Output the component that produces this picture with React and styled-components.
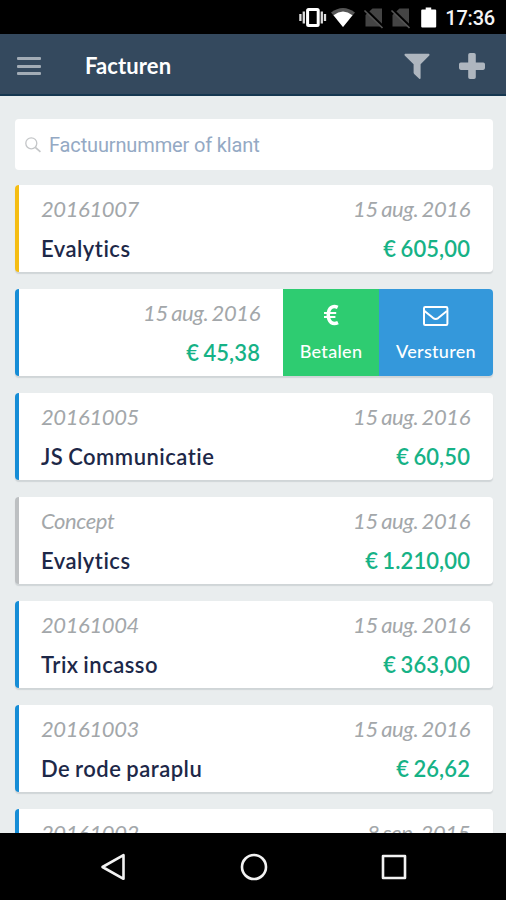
import React from 'react';
import { styled, createGlobalStyle } from 'styled-components';

const GlobalStyle = createGlobalStyle`
  * { box-sizing: border-box; }
  body {
    margin: 0;
    background: #e9edee;
    font-family: Lato, "Open Sans", sans-serif;
    font-variant-ligatures: none;
  }
`;

const Phone = styled.div`
  width: 506px;
  height: 900px;
  display: flex;
  flex-direction: column;
  overflow: hidden;
  background: #e9edee;
`;

const StatusBar = styled.div`
  height: 34px;
  flex: none;
  background: #000;
  display: flex;
  align-items: center;
  justify-content: flex-end;
  padding-right: 11px;
`;

const StatusIcons = styled.svg`
  display: block;
  width: 146px;
  height: 34px;
`;

const Clock = styled.span`
  width: 50px;
  color: #f4f4f4;
  font: 500 20px/34px Roboto, sans-serif;
  letter-spacing: -0.2px;
  text-align: right;
  padding-top: 2px;
  white-space: nowrap;
`;

const Header = styled.header`
  height: 62px;
  flex: none;
  display: flex;
  align-items: center;
  background: #34495e;
  border-bottom: 2px solid #153750;
  padding: 4px 21px 0 17px;
`;

const MenuButton = styled.div`
  width: 24px;
  height: 18px;
  display: flex;
  flex-direction: column;
  justify-content: space-between;

  span {
    height: 3px;
    border-radius: 1px;
    background: #a2acb6;
  }
`;

const Title = styled.h1`
  flex: 1;
  margin: 0 0 0 44px;
  color: #fff;
  font-size: 22px;
  font-weight: 700;
  line-height: 28px;
  letter-spacing: 0.1px;
`;

const HeaderIcon = styled.svg`
  display: block;
  width: 26px;
  height: 26px;
  margin-left: ${(props) => props.$gap || 0}px;
  fill: #aeb6bf;
`;

const Content = styled.main`
  flex: 1;
  min-height: 0;
  overflow: hidden;
  padding: 23px 13px 0 15px;
`;

const SearchBox = styled.div`
  height: 51px;
  display: flex;
  align-items: center;
  background: #fff;
  border-radius: 4px;
  padding-left: 10px;
  margin-bottom: 15px;
  color: #94a9c4;
  font: 400 20px/51px Roboto, sans-serif;
  letter-spacing: -0.14px;

  svg {
    width: 16px;
    height: 16px;
    margin-right: 8px;
  }

  span {
    padding-top: 2px;
  }
`;

const Card = styled.div`
  height: 87px;
  display: flex;
  margin-bottom: 17px;
  background: #fff;
  border-left: 4px solid ${(props) => props.$color};
  border-radius: 4px;
  box-shadow: 0 2px 1px #d0d5d7;
`;

const Info = styled.div`
  flex: 1;
  padding: 7px 23px 0 ${(props) => (props.$swiped ? 0 : 22)}px;
`;

const Row = styled.div`
  display: flex;
  justify-content: ${(props) => (props.$swiped ? 'flex-end' : 'space-between')};
  height: 40px;
  line-height: 34px;
  white-space: nowrap;
`;

const Meta = styled.span`
  color: #a3a7aa;
  font-size: 22px;
  font-style: italic;
  font-weight: 400;
  letter-spacing: -0.4px;
  word-spacing: -1.4px;
`;

const Customer = styled.span`
  color: #1d2848;
  font-size: 22px;
  font-weight: 600;
  letter-spacing: 0.5px;
  word-spacing: -1.2px;
`;

const Amount = styled.span`
  color: #16b286;
  font-size: 22px;
  font-weight: 600;
  letter-spacing: 0.1px;
  word-spacing: -1.2px;
`;

const Action = styled.div`
  width: ${(props) => props.$width}px;
  display: flex;
  flex-direction: column;
  align-items: center;
  background: ${(props) => props.$color};
  border-radius: ${(props) => (props.$last ? '0 4px 4px 0' : 0)};
  padding-top: 13px;
  color: #fff;
  font-size: 18px;
  font-weight: 500;
  line-height: 24px;
  letter-spacing: 0.3px;

  svg {
    display: block;
    width: 26px;
    height: 26px;
    margin-bottom: 11px;
  }
`;

const NavBar = styled.nav`
  height: 67px;
  flex: none;
  display: flex;
  align-items: center;
  justify-content: space-between;
  background: #000;
  padding: 0 97px 0 98px;

  svg {
    width: 30px;
    height: 30px;
    fill: none;
    stroke: #f2f2f2;
    stroke-width: 2.6;
    stroke-linejoin: round;
  }
`;

const BLUE = '#168dd6';

const invoices = [
  { number: '20161007', customer: 'Evalytics', date: '15 aug. 2016', amount: '€ 605,00', color: '#f5bd13' },
  { date: '15 aug. 2016', amount: '€ 45,38', color: BLUE, swiped: true },
  { number: '20161005', customer: 'JS Communicatie', date: '15 aug. 2016', amount: '€ 60,50', color: BLUE },
  { number: 'Concept', customer: 'Evalytics', date: '15 aug. 2016', amount: '€ 1.210,00', color: '#bdc0c2' },
  { number: '20161004', customer: 'Trix incasso', date: '15 aug. 2016', amount: '€ 363,00', color: BLUE },
  { number: '20161003', customer: 'De rode paraplu', date: '15 aug. 2016', amount: '€ 26,62', color: BLUE },
  { number: '20161002', date: '8 sep. 2015', color: BLUE },
];

const Invoice = ({ item }) => (
  <Card $color={item.color}>
    <Info $swiped={item.swiped}>
      <Row $swiped={item.swiped}>
        {item.number && <Meta>{item.number}</Meta>}
        <Meta>{item.date}</Meta>
      </Row>
      <Row $swiped={item.swiped}>
        {item.customer && <Customer>{item.customer}</Customer>}
        {item.amount && <Amount>{item.amount}</Amount>}
      </Row>
    </Info>
    {item.swiped && (
      <>
        <Action $color="#2ecc71" $width={96}>
          <svg viewBox="0 0 26 26" fill="none" stroke="#fff">
            <path d="M19.7 5.3C14.5 2.8 10.3 5.8 10.3 13s4.4 10.2 9.7 7.7" strokeWidth="3.5" />
            <path d="M6 11h12.2M6 15h11.4" strokeWidth="2" />
          </svg>
          Betalen
        </Action>
        <Action $color="#3498db" $width={114} $last>
          <svg viewBox="0 0 26 26" fill="none" stroke="#fff" strokeWidth="2" strokeLinejoin="round">
            <rect x="1" y="5" width="23.4" height="18" rx="1.2" />
            <path d="M1.5 9l8.7 7.1q2.5 1.8 5 0L23.9 9" />
          </svg>
          Versturen
        </Action>
      </>
    )}
  </Card>
);

const App = () => {
  return (
    <Phone>
      <GlobalStyle />
      <StatusBar>
        <StatusIcons viewBox="-4 0 146 34">
          {/* vibrate */}
          <path d="M-2.6 14v7M.8 11.5v12M18.8 11.5v12M22 14v7" stroke="#ddd" strokeWidth="2.3" />
          <rect x="4.6" y="9.4" width="10.6" height="16.2" rx="1" fill="none" stroke="#fff" strokeWidth="3" />
          {/* wifi */}
          <path d="M28 12.5Q40 3.5 52 12.5L40 27z" fill="#555" />
          <path d="M30.5 15.2Q40 8 49.5 15.2L40 27z" fill="#fff" />
          {/* no sim */}
          <path d="M69.5 8.5H79v18H62.5V15z" fill="#444" />
          <path d="M62 9l18.5 18" stroke="#000" strokeWidth="2.6" />
          <path d="M61.5 10.5L79.5 28" stroke="#555" strokeWidth="1.7" />
          <path d="M96.5 8.5h9.5v18H89.5V15z" fill="#444" />
          <path d="M89 9l18.5 18" stroke="#000" strokeWidth="2.6" />
          <path d="M88.5 10.5L106.5 28" stroke="#555" strokeWidth="1.7" />
          {/* battery */}
          <path d="M122.7 7.5h5.5v2h4q1 0 1 1v16q0 1-1 1h-13q-1 0-1-1v-16q0-1 1-1h3.5z" fill="#fff" />
        </StatusIcons>
        <Clock>17:36</Clock>
      </StatusBar>
      <Header>
        <MenuButton>
          <span />
          <span />
          <span />
        </MenuButton>
        <Title>Facturen</Title>
        <HeaderIcon viewBox="0 0 26 26">
          <path d="M1.2 .8h23.6q1.2.5.5 1.7L16.6 11.2v14q-.3 1.1-1.4.5l-5-4.8q-.6-.6-.6-1.2v-8.5L.7 2.5Q0 1.3 1.2.8z" />
        </HeaderIcon>
        <HeaderIcon viewBox="0 0 26 26" $gap={29}>
          <path d="M11 0h4q1.8 0 1.8 1.8v7.6h7.4q1.8 0 1.8 1.8v3.9q0 1.8-1.8 1.8h-7.4v7.3q0 1.8-1.8 1.8h-4q-1.8 0-1.8-1.8v-7.3H1.8Q0 16.9 0 15.1v-3.9q0-1.8 1.8-1.8h7.4V1.8Q9.2 0 11 0z" />
        </HeaderIcon>
      </Header>
      <Content>
        <SearchBox>
          <svg viewBox="0 0 16 16" fill="none" stroke="#c4c6c8" strokeWidth="1.3">
            <circle cx="6.3" cy="6.3" r="5.5" />
            <path d="M10.3 10.3l5.2 4.6" strokeWidth="1.8" />
          </svg>
          <span>Factuurnummer of klant</span>
        </SearchBox>
        {invoices.map((item, i) => (
          <Invoice key={i} item={item} />
        ))}
      </Content>
      <NavBar>
        <svg viewBox="0 0 30 30">
          <path d="M4.5 15L25.5 3.2v23.6z" />
        </svg>
        <svg viewBox="0 0 30 30">
          <circle cx="15" cy="15" r="12" />
        </svg>
        <svg viewBox="0 0 30 30">
          <rect x="4" y="4" width="22" height="22" />
        </svg>
      </NavBar>
    </Phone>
  );
};

export default App;
